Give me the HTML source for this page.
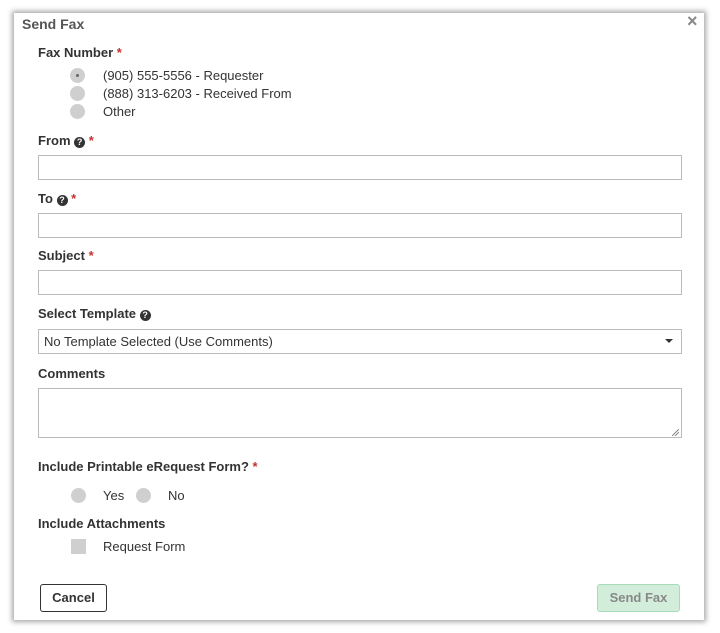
<!DOCTYPE html>
<html><head><style>
body{margin:0;width:720px;height:633px;background:#fff;font-family:"Liberation Sans",sans-serif;position:relative;overflow:hidden}
.m{position:absolute;left:14px;top:13px;width:690px;height:607px;background:#fff;box-shadow:0 0 5px 2px rgba(0,0,0,.35)}
.a{position:absolute;white-space:nowrap}
.t{font-size:14px;font-weight:bold;color:#555}
.l{font-size:13px;font-weight:bold;color:#333}
.r{color:#c9302c}
.o{font-size:13px;color:#333}
.c{position:absolute;width:15px;height:15px;border-radius:50%;background:#cfcfcf}
.i{position:absolute;left:24px;width:642px;height:23px;border:1px solid #bbb;background:#fff}
.q{display:inline-block;width:11px;height:11px;border-radius:50%;background:#333;color:#fff;font-size:9px;line-height:11px;text-align:center;vertical-align:0px}
</style></head><body>
<div class="m">
<div class="a t" style="left:8px;top:3px">Send Fax</div>
<div class="a" style="left:673px;top:-2px;font-size:18px;font-weight:bold;color:#888">×</div>
<div class="a l" style="left:24px;top:32px">Fax Number <span class="r">*</span></div>
<div class="c" style="left:56px;top:55px"></div><div class="a" style="left:62px;top:61px;width:3px;height:3px;border-radius:50%;background:#666"></div>
<div class="a o" style="left:89px;top:55px">(905) 555-5556 - Requester</div>
<div class="c" style="left:56px;top:73px"></div><div class="a o" style="left:89px;top:73px">(888) 313-6203 - Received From</div>
<div class="c" style="left:56px;top:91px"></div><div class="a o" style="left:89px;top:91px">Other</div>
<div class="a l" style="left:24px;top:120px">From <span class="q">?</span> <span class="r">*</span></div>
<div class="i" style="top:142px"></div>
<div class="a l" style="left:24px;top:178px">To <span class="q">?</span> <span class="r">*</span></div>
<div class="i" style="top:200px"></div>
<div class="a l" style="left:24px;top:235px">Subject <span class="r">*</span></div>
<div class="i" style="top:257px"></div>
<div class="a l" style="left:24px;top:293px">Select Template <span class="q">?</span></div>
<div class="i" style="top:316px"></div>
<div class="a o" style="left:30px;top:321px">No Template Selected (Use Comments)</div>
<div class="a" style="left:651px;top:326px;border:4px solid transparent;border-top:4px solid #333;border-bottom:0"></div>
<div class="a l" style="left:24px;top:353px">Comments</div>
<div class="i" style="top:375px;height:48px"></div>
<svg class="a" style="left:658px;top:416px" width="7" height="7"><path d="M0 7L7 0M3 7L7 3" stroke="#888" stroke-width="1"/></svg>
<div class="a l" style="left:24px;top:446px">Include Printable eRequest Form? <span class="r">*</span></div>
<div class="c" style="left:57px;top:475px"></div><div class="a o" style="left:89px;top:475px">Yes</div>
<div class="c" style="left:122px;top:475px"></div><div class="a o" style="left:154px;top:475px">No</div>
<div class="a l" style="left:24px;top:503px">Include Attachments</div>
<div class="a" style="left:57px;top:526px;width:15px;height:15px;background:#cfcfcf"></div>
<div class="a o" style="left:89px;top:526px">Request Form</div>
<div class="a" style="left:26px;top:571px;width:65px;height:26px;border:1.5px solid #333;border-radius:3px;font-size:13px;font-weight:bold;color:#333;text-align:center;line-height:26px">Cancel</div>
<div class="a" style="left:583px;top:571px;width:81px;height:26px;border:1px solid #a8dbb8;background:#d2eedb;border-radius:3px;font-size:13px;font-weight:bold;color:#888;text-align:center;line-height:26px">Send Fax</div>
</div>
</body></html>
